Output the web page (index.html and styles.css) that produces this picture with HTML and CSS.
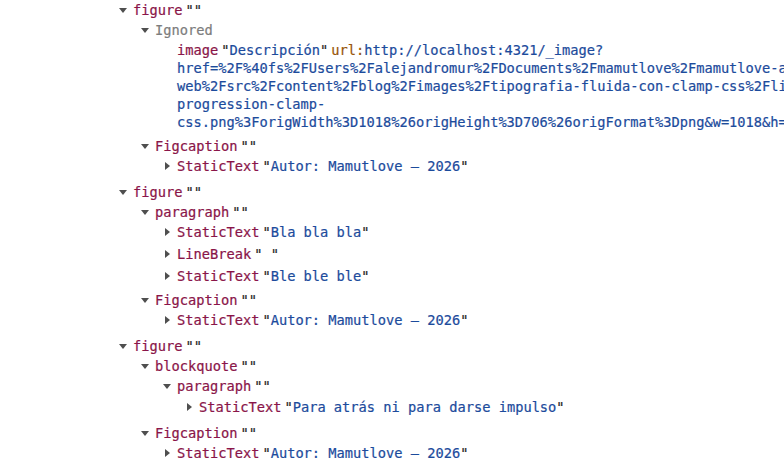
FILE: index.html
```html
<!DOCTYPE html>
<html lang="es">
<head>
<meta charset="utf-8">
<title>Accessibility tree</title>
<link rel="stylesheet" href="styles.css">
</head>
<body>
<div class="tree">

  <div class="node">
    <div class="row"><span class="tw"><svg class="down" viewBox="0 0 8 5"><path d="M0 0H8L4 5Z"/></svg></span><span class="role">figure</span><span class="name"><span class="q">""</span></span></div>
    <div class="kids">
      <div class="node">
        <div class="row"><span class="tw"><svg class="down" viewBox="0 0 8 5"><path d="M0 0H8L4 5Z"/></svg></span><span class="ignored">Ignored</span></div>
        <div class="kids">
          <div class="row image-row"><span class="tw"></span><div class="wrap"><span class="role">image</span><span class="name"><span class="q">"</span><span class="str">Descripción</span><span class="q">"</span></span><span class="attr">url:</span><span class="str">http://localhost:4321/_image?href=%2F%40fs%2FUsers%2Falejandromur%2FDocuments%2Fmamutlove%2Fmamutlove-astro-web%2Fsrc%2Fcontent%2Fblog%2Fimages%2Ftipografia-fluida-con-clamp-css%2Flinear-progression-clamp-css.png%3ForigWidth%3D1018%26origHeight%3D706%26origFormat%3Dpng&amp;w=1018&amp;h=706&amp;f=webp</span></div></div>
        </div>
      </div>
      <div class="node">
        <div class="row"><span class="tw"><svg class="down" viewBox="0 0 8 5"><path d="M0 0H8L4 5Z"/></svg></span><span class="role">Figcaption</span><span class="name"><span class="q">""</span></span></div>
        <div class="kids">
          <div class="row"><span class="tw"><svg class="right" viewBox="0 0 5 8"><path d="M0 0L5 4L0 8Z"/></svg></span><span class="role">StaticText</span><span class="name"><span class="q">"</span><span class="str">Autor: Mamutlove — 2026</span><span class="q">"</span></span></div>
        </div>
      </div>
    </div>
  </div>

  <div class="node">
    <div class="row"><span class="tw"><svg class="down" viewBox="0 0 8 5"><path d="M0 0H8L4 5Z"/></svg></span><span class="role">figure</span><span class="name"><span class="q">""</span></span></div>
    <div class="kids">
      <div class="node">
        <div class="row"><span class="tw"><svg class="down" viewBox="0 0 8 5"><path d="M0 0H8L4 5Z"/></svg></span><span class="role">paragraph</span><span class="name"><span class="q">""</span></span></div>
        <div class="kids">
          <div class="row h22"><span class="tw"><svg class="right" viewBox="0 0 5 8"><path d="M0 0L5 4L0 8Z"/></svg></span><span class="role">StaticText</span><span class="name"><span class="q">"</span><span class="str">Bla bla bla</span><span class="q">"</span></span></div>
          <div class="row h22"><span class="tw"><svg class="right" viewBox="0 0 5 8"><path d="M0 0L5 4L0 8Z"/></svg></span><span class="role">LineBreak</span><span class="name"><span class="q">"</span><span class="str"> </span><span class="q">"</span></span></div>
          <div class="row h21"><span class="tw"><svg class="right" viewBox="0 0 5 8"><path d="M0 0L5 4L0 8Z"/></svg></span><span class="role">StaticText</span><span class="name"><span class="q">"</span><span class="str">Ble ble ble</span><span class="q">"</span></span></div>
        </div>
      </div>
      <div class="node">
        <div class="row"><span class="tw"><svg class="down" viewBox="0 0 8 5"><path d="M0 0H8L4 5Z"/></svg></span><span class="role">Figcaption</span><span class="name"><span class="q">""</span></span></div>
        <div class="kids">
          <div class="row"><span class="tw"><svg class="right" viewBox="0 0 5 8"><path d="M0 0L5 4L0 8Z"/></svg></span><span class="role">StaticText</span><span class="name"><span class="q">"</span><span class="str">Autor: Mamutlove — 2026</span><span class="q">"</span></span></div>
        </div>
      </div>
    </div>
  </div>

  <div class="node">
    <div class="row"><span class="tw"><svg class="down" viewBox="0 0 8 5"><path d="M0 0H8L4 5Z"/></svg></span><span class="role">figure</span><span class="name"><span class="q">""</span></span></div>
    <div class="kids">
      <div class="node">
        <div class="row"><span class="tw"><svg class="down" viewBox="0 0 8 5"><path d="M0 0H8L4 5Z"/></svg></span><span class="role">blockquote</span><span class="name"><span class="q">""</span></span></div>
        <div class="kids">
          <div class="node">
            <div class="row h21"><span class="tw"><svg class="down" viewBox="0 0 8 5"><path d="M0 0H8L4 5Z"/></svg></span><span class="role">paragraph</span><span class="name"><span class="q">""</span></span></div>
            <div class="kids">
              <div class="row"><span class="tw"><svg class="right" viewBox="0 0 5 8"><path d="M0 0L5 4L0 8Z"/></svg></span><span class="role">StaticText</span><span class="name"><span class="q">"</span><span class="str">Para atrás ni para darse impulso</span><span class="q">"</span></span></div>
            </div>
          </div>
        </div>
      </div>
      <div class="node">
        <div class="row"><span class="tw"><svg class="down" viewBox="0 0 8 5"><path d="M0 0H8L4 5Z"/></svg></span><span class="role">Figcaption</span><span class="name"><span class="q">""</span></span></div>
        <div class="kids">
          <div class="row"><span class="tw"><svg class="right" viewBox="0 0 5 8"><path d="M0 0L5 4L0 8Z"/></svg></span><span class="role">StaticText</span><span class="name"><span class="q">"</span><span class="str">Autor: Mamutlove — 2026</span><span class="q">"</span></span></div>
        </div>
      </div>
    </div>
  </div>

</div>
</body>
</html>
```

FILE: styles.css
```css
html, body {
  margin: 0;
  padding: 0;
  background: #ffffff;
  overflow: hidden;
}

body {
  font-family: "DejaVu Sans Mono", "Liberation Mono", monospace;
  font-size: 13.7px;
  color: #222222;
  -webkit-text-stroke: 0.2px currentColor;
}

.tree {
  padding-left: 119px;
}

.kids {
  padding-left: 22px;
  padding-bottom: 3px;
}

.row {
  display: flex;
  align-items: flex-start;
  height: 20px;
  line-height: 20px;
  white-space: pre;
}

.row.h21 { height: 21px; }
.row.h22 { height: 22px; }

.tw {
  flex: none;
  width: 14px;
  height: 20px;
}

.tw svg {
  display: block;
  fill: #4f4f4f;
}

.tw .down {
  width: 8px;
  height: 5px;
  margin-top: 8px;
}

.tw .right {
  width: 5px;
  height: 8px;
  margin-top: 6px;
  margin-left: 2px;
}

.role {
  color: #8a1549;
}

.ignored {
  color: #7d7d7d;
}

.name {
  margin-left: 3px;
}

.q {
  color: #2a2a2a;
}

.str {
  color: #1c4b9c;
}

.attr {
  color: #98560a;
  margin-left: 3px;
}

.image-row {
  height: 93px;
}

.wrap {
  flex: none;
  width: 85ch;
  white-space: normal;
  line-height: 18px;
  padding-top: 1px;
}
```
